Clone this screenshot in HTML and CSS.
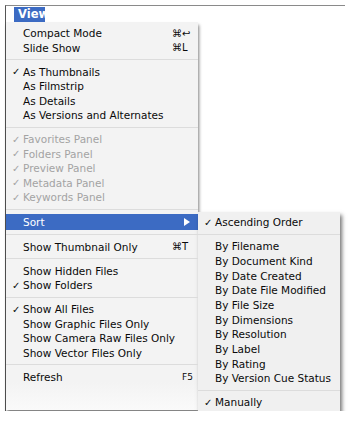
FILE: index.html
```html
<!DOCTYPE html>
<html lang="en">
<head>
    <meta charset="UTF-8">
    <title>View Menu</title>
    <link rel="stylesheet" href="styles.css">
</head>
<body>
    <div class="window">
        <div class="menubar">
            <span class="title">View</span>
        </div>
        <div class="menus">
            <div class="menu">
                <div class="item"><span class="check"></span><span class="label">Compact Mode</span><span class="key">⌘↩</span></div>
                <div class="item"><span class="check"></span><span class="label">Slide Show</span><span class="key">⌘L</span></div>
                <div class="sep"></div>
                <div class="item"><span class="check">✓</span><span class="label">As Thumbnails</span></div>
                <div class="item"><span class="check"></span><span class="label">As Filmstrip</span></div>
                <div class="item"><span class="check"></span><span class="label">As Details</span></div>
                <div class="item"><span class="check"></span><span class="label">As Versions and Alternates</span></div>
                <div class="sep"></div>
                <div class="item disabled"><span class="check">✓</span><span class="label">Favorites Panel</span></div>
                <div class="item disabled"><span class="check">✓</span><span class="label">Folders Panel</span></div>
                <div class="item disabled"><span class="check">✓</span><span class="label">Preview Panel</span></div>
                <div class="item disabled"><span class="check">✓</span><span class="label">Metadata Panel</span></div>
                <div class="item disabled"><span class="check">✓</span><span class="label">Keywords Panel</span></div>
                <div class="sep"></div>
                <div class="item active"><span class="check"></span><span class="label">Sort</span><span class="arrow"></span></div>
                <div class="sep"></div>
                <div class="item"><span class="check"></span><span class="label">Show Thumbnail Only</span><span class="key">⌘T</span></div>
                <div class="sep"></div>
                <div class="item"><span class="check"></span><span class="label">Show Hidden Files</span></div>
                <div class="item"><span class="check">✓</span><span class="label">Show Folders</span></div>
                <div class="sep"></div>
                <div class="item"><span class="check">✓</span><span class="label">Show All Files</span></div>
                <div class="item"><span class="check"></span><span class="label">Show Graphic Files Only</span></div>
                <div class="item"><span class="check"></span><span class="label">Show Camera Raw Files Only</span></div>
                <div class="item"><span class="check"></span><span class="label">Show Vector Files Only</span></div>
                <div class="sep"></div>
                <div class="item"><span class="check"></span><span class="label">Refresh</span><span class="key fkey">F5</span></div>
            </div>
            <div class="submenu">
                <div class="item"><span class="check">✓</span><span class="label">Ascending Order</span></div>
                <div class="sep"></div>
                <div class="item"><span class="check"></span><span class="label">By Filename</span></div>
                <div class="item"><span class="check"></span><span class="label">By Document Kind</span></div>
                <div class="item"><span class="check"></span><span class="label">By Date Created</span></div>
                <div class="item"><span class="check"></span><span class="label">By Date File Modified</span></div>
                <div class="item"><span class="check"></span><span class="label">By File Size</span></div>
                <div class="item"><span class="check"></span><span class="label">By Dimensions</span></div>
                <div class="item"><span class="check"></span><span class="label">By Resolution</span></div>
                <div class="item"><span class="check"></span><span class="label">By Label</span></div>
                <div class="item"><span class="check"></span><span class="label">By Rating</span></div>
                <div class="item"><span class="check"></span><span class="label">By Version Cue Status</span></div>
                <div class="sep"></div>
                <div class="item"><span class="check">✓</span><span class="label">Manually</span></div>
            </div>
        </div>
    </div>
</body>
</html>
```

FILE: styles.css
```css
body {
    margin: 0;
    background: #fff;
    font-family: 'DejaVu Sans', sans-serif;
    font-size: 10.5px;
    color: #0a0a0a;
}

.window {
    margin: 5px 5px 0 5px;
    border-top: 1px solid #8a8a8a;
    border-left: 1px solid #555;
    height: 405px;
}

.menubar {
    height: 16px;
    padding-top: 1px;
    padding-left: 8px;
    box-sizing: border-box;
}

.title {
    display: inline-block;
    height: 15px;
    line-height: 15px;
    width: 31px;
    padding-left: 4px;
    box-sizing: border-box;
    background: #3c6bc3;
    color: #fff;
    font-size: 11.5px;
    font-weight: bold;
}

.menus {
    display: flex;
    align-items: flex-start;
}

.menu {
    width: 192px;
    height: 388px;
    padding-top: 4px;
    box-sizing: border-box;
    background: linear-gradient(#f3f3f3, #f3f3f3 360px, #fafafa);
    box-shadow: 1px 3px 3px rgba(0, 0, 0, 0.5);
}

.submenu {
    width: 142px;
    margin-top: 190px;
    padding: 3px 0 6px;
    background: #f0f0f0;
    box-shadow: 2px 3px 4px rgba(0, 0, 0, 0.55);
}

.item {
    display: flex;
    align-items: center;
    height: 14.5px;
    padding-left: 6px;
    white-space: nowrap;
}

.submenu .item {
    height: 14.65px;
}

.check {
    width: 11px;
    flex: none;
    font-size: 10px;
}

.menu .label {
    width: 149px;
    flex: none;
}

.key {
    font-size: 10px;
}

.fkey {
    padding-left: 10px;
    font-size: 9px;
}

.disabled {
    color: #a3a3a3;
}

.active {
    background: #3c6bc3;
    color: #fff;
    height: 16px;
}

.arrow {
    margin-left: 12px;
    width: 0;
    height: 0;
    border-top: 4px solid transparent;
    border-bottom: 4px solid transparent;
    border-left: 6px solid #fff;
}

.sep {
    height: 9.5px;
    position: relative;
}

.sep::after {
    content: '';
    position: absolute;
    left: 0;
    right: 0;
    top: 4px;
    border-top: 1px solid #dcdcdc;
}
```
